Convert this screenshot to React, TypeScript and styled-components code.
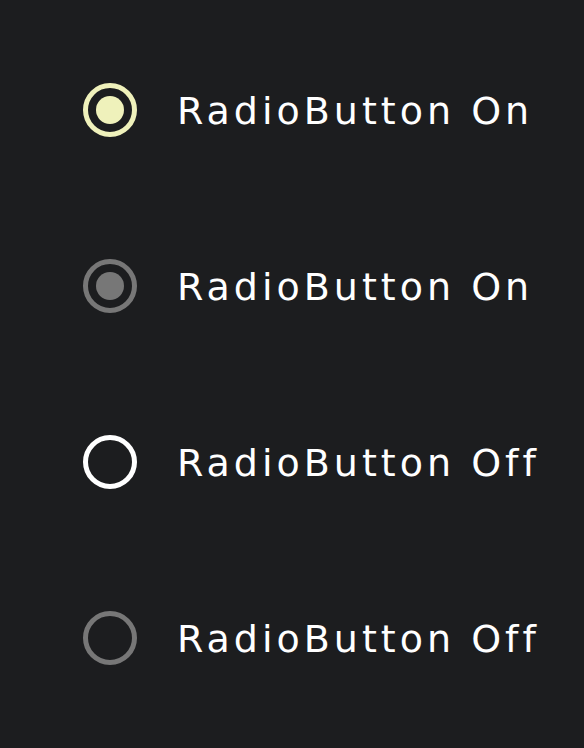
import styled, { createGlobalStyle } from "styled-components";

const GlobalStyle = createGlobalStyle`
    html, body {
        margin: 0;
        padding: 0;
        background: #1c1d1f;
    }
`;

const Screen = styled.div`
    width: 584px;
    height: 748px;
    background: #1c1d1f;
    display: flex;
    flex-direction: column;
    padding: 22px 0 0 83px;
    box-sizing: border-box;
    font-family: "DejaVu Sans", sans-serif;
`;

const Row = styled.label`
    height: 176px;
    display: flex;
    align-items: center;
    gap: 40px;
`;

const Ring = styled.span<{ $color: string }>`
    width: 54px;
    height: 54px;
    box-sizing: border-box;
    border: 5px solid ${({ $color }) => $color};
    border-radius: 50%;
    display: flex;
    align-items: center;
    justify-content: center;
    flex-shrink: 0;
`;

const Dot = styled.span<{ $color: string }>`
    width: 28px;
    height: 28px;
    border-radius: 50%;
    background: ${({ $color }) => $color};
`;

const Label = styled.span`
    color: #ffffff;
    font-size: 38px;
    letter-spacing: 4px;
    padding-top: 2px;
`;

const options = [
    { label: "RadioButton On", checked: true, color: "#eff1bb" },
    { label: "RadioButton On", checked: true, color: "#777777" },
    { label: "RadioButton Off", checked: false, color: "#ffffff" },
    { label: "RadioButton Off", checked: false, color: "#777777" },
];

const App = () => (
    <>
        <GlobalStyle />
        <Screen>
            {options.map((o, i) => (
                <Row key={i}>
                    <Ring $color={o.color}>{o.checked && <Dot $color={o.color} />}</Ring>
                    <Label>{o.label}</Label>
                </Row>
            ))}
        </Screen>
    </>
);

export default App;
